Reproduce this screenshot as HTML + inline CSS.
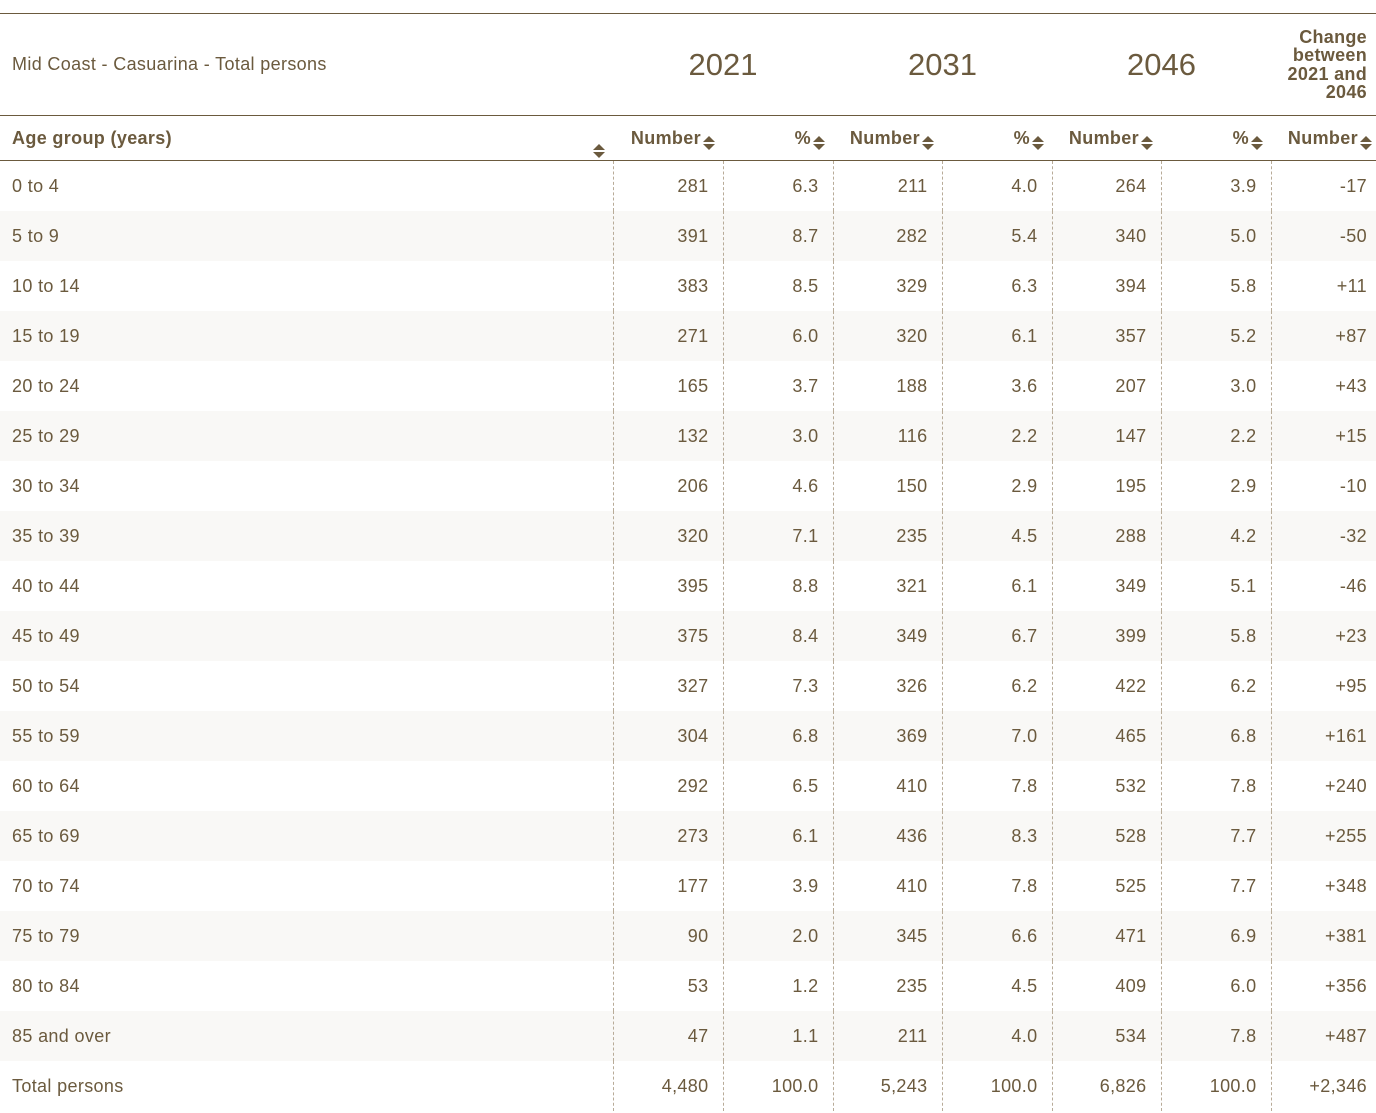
<!DOCTYPE html>
<html><head><meta charset="utf-8"><style>
*{margin:0;padding:0;box-sizing:border-box}
body{width:1376px;height:1113px;background:#fff;font-family:"Liberation Sans",Arial,sans-serif;color:#6b5a3e;overflow:hidden;position:relative}
table{position:absolute;left:0;top:13px;border-collapse:collapse;table-layout:fixed;width:1376px}
td,th{font-size:18px;letter-spacing:0.35px;white-space:nowrap}
.top td{height:102px;border-top:1.5px solid #6b5a3e;border-bottom:1.5px solid #6b5a3e;vertical-align:middle}
.yr{font-size:31px;text-align:center;letter-spacing:0}
.hd th{height:45px;border-bottom:1.5px solid #6b5a3e;font-weight:bold;text-align:right;padding-right:8px;vertical-align:top;padding-top:12px;position:relative}
.hd th:first-child{text-align:left;padding-left:12px}
.hd th:last-child{padding-right:4px}
.s{display:inline-block;width:12px;height:16px;position:relative;top:8px;margin-left:2px}
.s:before{content:"";position:absolute;left:0;top:0;border:6px solid transparent;border-top:0;border-bottom:6px solid #6b5a3e}
.s:after{content:"";position:absolute;left:0;top:8px;border:6px solid transparent;border-bottom:0;border-top:6px solid #6b5a3e}
.b td{height:50px;text-align:right;padding-right:14px;padding-top:2px;border-left:1px dashed #b8ab98}
.b td:first-child{text-align:left;padding-left:12px;border-left:none}
.b td:last-child{padding-right:9px}
.b tr:nth-child(even) td{background:#f9f8f6}
</style></head><body>
<table>
<colgroup><col style="width:613px"><col style="width:110px"><col style="width:110px"><col style="width:109px"><col style="width:110px"><col style="width:109px"><col style="width:110px"><col style="width:105px"></colgroup>
<tr class="top"><td style="padding-left:12px">Mid Coast - Casuarina - Total persons</td><td colspan="2" class="yr">2021</td><td colspan="2" class="yr">2031</td><td colspan="2" class="yr">2046</td><td style="text-align:right;font-weight:bold;font-size:18px;letter-spacing:0.3px;line-height:18.5px;padding-right:9px">Change<br>between<br>2021 and<br>2046</td></tr>
<tr class="hd"><th>Age group (years)<span class="s" style="position:absolute;right:8px;top:28px"></span></th><th>Number<span class="s"></span></th><th>%<span class="s"></span></th><th>Number<span class="s"></span></th><th>%<span class="s"></span></th><th>Number<span class="s"></span></th><th>%<span class="s"></span></th><th>Number<span class="s"></span></th></tr>
<tbody class="b">
<tr><td>0 to 4</td><td>281</td><td>6.3</td><td>211</td><td>4.0</td><td>264</td><td>3.9</td><td>-17</td></tr>
<tr><td>5 to 9</td><td>391</td><td>8.7</td><td>282</td><td>5.4</td><td>340</td><td>5.0</td><td>-50</td></tr>
<tr><td>10 to 14</td><td>383</td><td>8.5</td><td>329</td><td>6.3</td><td>394</td><td>5.8</td><td>+11</td></tr>
<tr><td>15 to 19</td><td>271</td><td>6.0</td><td>320</td><td>6.1</td><td>357</td><td>5.2</td><td>+87</td></tr>
<tr><td>20 to 24</td><td>165</td><td>3.7</td><td>188</td><td>3.6</td><td>207</td><td>3.0</td><td>+43</td></tr>
<tr><td>25 to 29</td><td>132</td><td>3.0</td><td>116</td><td>2.2</td><td>147</td><td>2.2</td><td>+15</td></tr>
<tr><td>30 to 34</td><td>206</td><td>4.6</td><td>150</td><td>2.9</td><td>195</td><td>2.9</td><td>-10</td></tr>
<tr><td>35 to 39</td><td>320</td><td>7.1</td><td>235</td><td>4.5</td><td>288</td><td>4.2</td><td>-32</td></tr>
<tr><td>40 to 44</td><td>395</td><td>8.8</td><td>321</td><td>6.1</td><td>349</td><td>5.1</td><td>-46</td></tr>
<tr><td>45 to 49</td><td>375</td><td>8.4</td><td>349</td><td>6.7</td><td>399</td><td>5.8</td><td>+23</td></tr>
<tr><td>50 to 54</td><td>327</td><td>7.3</td><td>326</td><td>6.2</td><td>422</td><td>6.2</td><td>+95</td></tr>
<tr><td>55 to 59</td><td>304</td><td>6.8</td><td>369</td><td>7.0</td><td>465</td><td>6.8</td><td>+161</td></tr>
<tr><td>60 to 64</td><td>292</td><td>6.5</td><td>410</td><td>7.8</td><td>532</td><td>7.8</td><td>+240</td></tr>
<tr><td>65 to 69</td><td>273</td><td>6.1</td><td>436</td><td>8.3</td><td>528</td><td>7.7</td><td>+255</td></tr>
<tr><td>70 to 74</td><td>177</td><td>3.9</td><td>410</td><td>7.8</td><td>525</td><td>7.7</td><td>+348</td></tr>
<tr><td>75 to 79</td><td>90</td><td>2.0</td><td>345</td><td>6.6</td><td>471</td><td>6.9</td><td>+381</td></tr>
<tr><td>80 to 84</td><td>53</td><td>1.2</td><td>235</td><td>4.5</td><td>409</td><td>6.0</td><td>+356</td></tr>
<tr><td>85 and over</td><td>47</td><td>1.1</td><td>211</td><td>4.0</td><td>534</td><td>7.8</td><td>+487</td></tr>
<tr><td>Total persons</td><td>4,480</td><td>100.0</td><td>5,243</td><td>100.0</td><td>6,826</td><td>100.0</td><td>+2,346</td></tr>
</tbody></table>
</body></html>
